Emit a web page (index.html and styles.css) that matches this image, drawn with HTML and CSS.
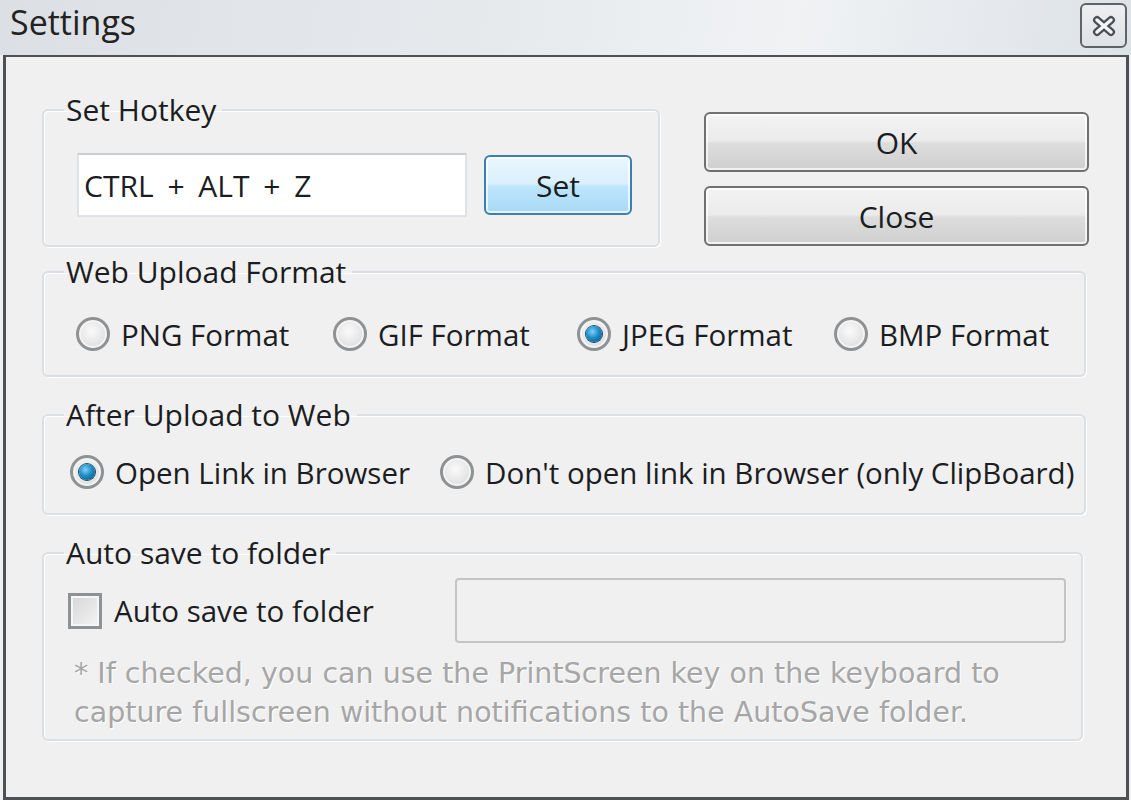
FILE: index.html
```html
<!DOCTYPE html>
<html lang="en">
<head>
  <meta charset="UTF-8" />
  <title>Settings</title>
  <link rel="stylesheet" href="styles.css">
</head>
<body>

  <div class="titlebar">
    <span class="title">Settings</span>
    <button class="close-x" aria-label="Close">
      <svg width="26" height="22" viewBox="0 0 26 22">
        <path d="M6 5 L20 17 M20 5 L6 17" stroke="#4a4f55" stroke-width="8" stroke-linecap="round" fill="none"/>
        <path d="M6 5 L20 17 M20 5 L6 17" stroke="#f4f5f6" stroke-width="3.5" stroke-linecap="round" fill="none"/>
      </svg>
    </button>
  </div>

  <div class="window">
    <div class="top-row">
      <fieldset class="group hotkey">
        <legend>Set Hotkey</legend>
        <div class="hotkey-row">
          <div class="textbox">CTRL + ALT + Z</div>
          <button class="btn btn-set">Set</button>
        </div>
      </fieldset>
      <div class="actions">
        <button class="btn btn-wide">OK</button>
        <button class="btn btn-wide">Close</button>
      </div>
    </div>

    <fieldset class="group format">
      <legend>Web Upload Format</legend>
      <div class="options">
        <label class="opt opt-png"><span class="radio"></span>PNG Format</label>
        <label class="opt opt-gif"><span class="radio"></span>GIF Format</label>
        <label class="opt opt-jpg"><span class="radio checked"></span>JPEG Format</label>
        <label class="opt"><span class="radio"></span>BMP Format</label>
      </div>
    </fieldset>

    <fieldset class="group after">
      <legend>After Upload to Web</legend>
      <div class="options">
        <label class="opt opt-open"><span class="radio checked"></span>Open Link in Browser</label>
        <label class="opt"><span class="radio"></span>Don't open link in Browser (only ClipBoard)</label>
      </div>
    </fieldset>

    <fieldset class="group autosave">
      <legend>Auto save to folder</legend>
      <div class="autosave-row">
        <label class="opt opt-check"><span class="checkbox"></span>Auto save to folder</label>
        <div class="textbox disabled"></div>
      </div>
      <p class="note">* If checked, you can use the PrintScreen key on the keyboard to<br>capture fullscreen without notifications to the AutoSave folder.</p>
    </fieldset>
  </div>

</body>
</html>
```

FILE: styles.css
```css
html, body {
  margin: 0;
  padding: 0;
  width: 1131px;
  height: 800px;
  overflow: hidden;
  background: #f0f0f0;
  font-family: "Open Sans", "Noto Sans", Arial, sans-serif;
  color: #1b1d22;
}
.titlebar {
  height: 55px;
  display: flex;
  align-items: flex-start;
  justify-content: space-between;
  background: linear-gradient(100deg, #dce0e4 0%, #e7eaed 45%, #f0f2f4 70%, #dde2e7 100%);
}
.title {
  font-size: 34px;
  line-height: 34px;
  margin: 5px 0 0 10px;
  color: #222;
}
.close-x {
  width: 47px;
  height: 45px;
  margin: 3px 4px 0 0;
  padding: 0;
  border: 2px solid #5f646a;
  border-radius: 6px;
  background: linear-gradient(#eceef0, #dfe2e5);
  display: flex;
  align-items: center;
  justify-content: center;
}
.window {
  box-sizing: border-box;
  margin: 0 2px 0 3px;
  height: 745px;
  border: 3px solid #4d5055;
  border-top-width: 2px;
  background: #f0f0f0;
  padding: 38px 30px 0 36px;
  display: flex;
  flex-direction: column;
}
.top-row {
  display: flex;
  gap: 44px;
  align-items: flex-start;
  margin-bottom: 10px;
}
.group {
  margin: 0;
  border: 2px solid #d9dfe4;
  border-radius: 6px;
  box-shadow: inset 1px 1px 0 #fff, 1px 1px 0 #fff;
  box-sizing: border-box;
}
.group legend {
  font-size: 30px;
  line-height: 30px;
  padding: 0 6px 0 2px;
}
.hotkey {
  width: 618px;
  flex-shrink: 0;
  padding: 28px 18px 28px 33px;
}
.hotkey legend { margin-left: -13px; }
.hotkey-row {
  display: flex;
  align-items: center;
  gap: 17px;
}
.textbox {
  box-sizing: border-box;
  width: 390px;
  height: 64px;
  background: #fff;
  border: 2px solid #dfe2e6;
  border-top-color: #c9cdd2;
  font-size: 30px;
  word-spacing: 6px;
  display: flex;
  align-items: center;
  padding-left: 5px;
}
.btn {
  font-family: inherit;
  font-size: 30px;
  color: #1b1d22;
  border: 2px solid #707070;
  border-radius: 6px;
  background: linear-gradient(#f3f3f3 0%, #ebebeb 48%, #dddddd 52%, #cfcfcf 100%);
  box-shadow: inset 0 0 0 2px rgba(255,255,255,0.7);
  padding: 0;
}
.btn-set {
  width: 148px;
  height: 60px;
  border-color: #3c7fb1;
  background: linear-gradient(#eaf6fd 0%, #d9f0fc 48%, #bee6fd 52%, #a7d9f5 100%);
}
.actions {
  display: flex;
  flex-direction: column;
  gap: 14px;
  margin-top: 17px;
}
.btn-wide {
  width: 385px;
  height: 60px;
}
.format {
  width: 1044px;
  padding: 27px 10px 21px 32px;
  margin-bottom: 23px;
}
.format legend { margin-left: -12px; }
.after {
  width: 1044px;
  padding: 22px 6px 21px 26px;
  margin-bottom: 23px;
}
.after legend { margin-left: -6px; }
.autosave {
  width: 1041px;
  padding: 10px 15px 7px 24px;
}
.autosave legend { margin-left: -4px; }
.options {
  display: flex;
  align-items: center;
}
.opt {
  display: flex;
  align-items: center;
  height: 40px;
  font-size: 29.5px;
  white-space: nowrap;
}
.opt-png { width: 257px; }
.opt-gif { width: 244px; }
.opt-jpg { width: 257px; }
.opt-open { width: 370px; }
.radio {
  box-sizing: border-box;
  flex-shrink: 0;
  width: 34px;
  height: 34px;
  border-radius: 50%;
  border: 3px solid #8f9294;
  background: radial-gradient(circle at 45% 40%, #fafafa 0%, #e6e6e6 55%, #cfcfcf 100%);
  box-shadow: inset 0 0 0 2px #f4f4f4;
  margin-right: 11px;
  display: flex;
  align-items: center;
  justify-content: center;
}
.radio.checked::after {
  content: "";
  width: 16px;
  height: 16px;
  border-radius: 50%;
  background: radial-gradient(circle at 40% 35%, #7fd2f8 0%, #1f8cc6 45%, #0c4c78 100%);
  box-shadow: 0 0 0 1px #0f4a72;
}
.autosave-row {
  display: flex;
  align-items: center;
  justify-content: space-between;
  height: 65px;
}
.checkbox {
  box-sizing: border-box;
  width: 34px;
  height: 36px;
  border: 3px solid #8f9294;
  background: linear-gradient(135deg, #d6d6d6, #f4f4f4);
  box-shadow: inset 0 0 0 2px #f6f6f6;
  margin-right: 12px;
}
.textbox.disabled {
  width: 611px;
  height: 65px;
  background: #f0f0f0;
  border: 2px solid #c2c4c6;
  border-radius: 4px;
}
.note {
  margin: 11px 0 0 6px;
  font-family: "DejaVu Sans", sans-serif;
  font-size: 28.5px;
  line-height: 39px;
  color: #a6a6a6;
  text-shadow: 1px 1px 0 #fff;
}
```
